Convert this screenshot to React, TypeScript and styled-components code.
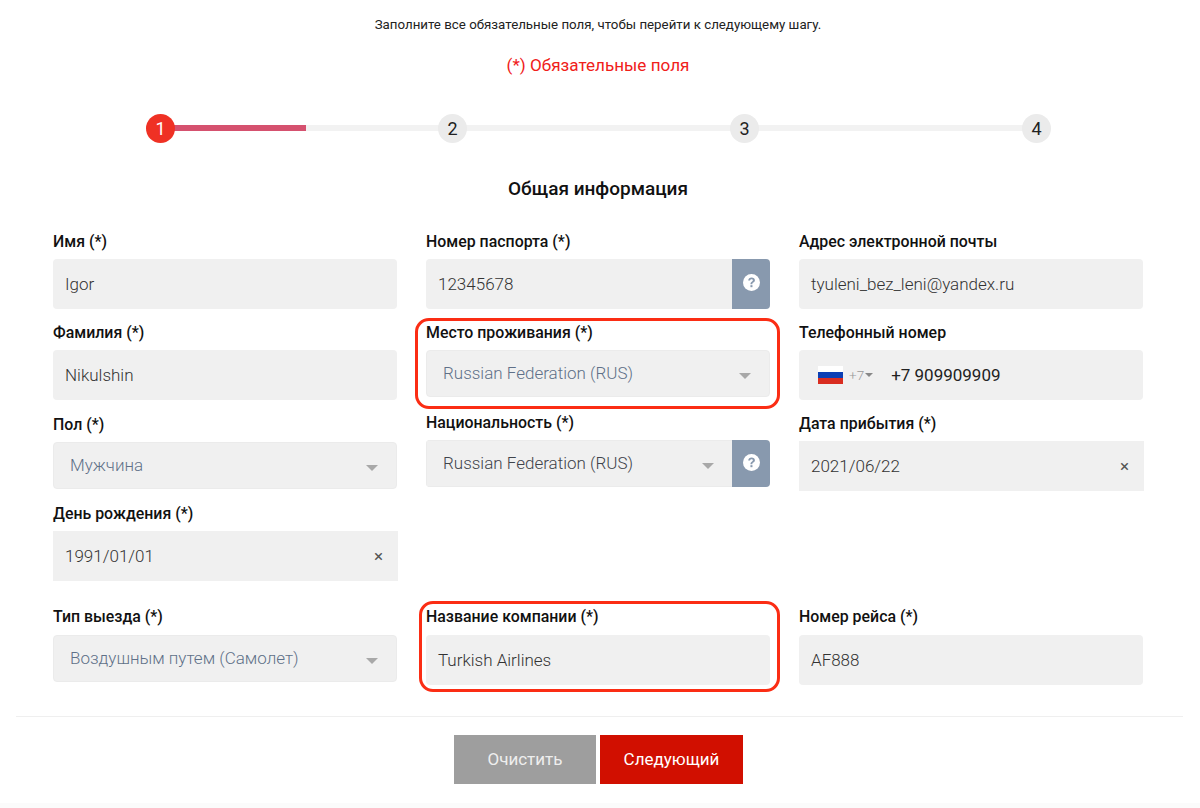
import React from "react";
import styled, { createGlobalStyle } from "styled-components";

const Global = createGlobalStyle`
  html, body { margin: 0; padding: 0; background: #fff; }
  body { font-family: Roboto, "Noto Sans", sans-serif; color: #111; }
`;

const Page = styled.div`
  width: 1200px;
  height: 808px;
  overflow: hidden;
  box-sizing: border-box;
  padding-top: 16px;
`;

const Intro = styled.p`
  margin: 0;
  height: 18px;
  line-height: 18px;
  padding-right: 4px;
  text-align: center;
  font-size: 13.3px;
  color: #222;
`;

const Required = styled.p`
  margin: 21px 0 0;
  height: 20px;
  line-height: 20px;
  padding-right: 4px;
  text-align: center;
  font-size: 17.1px;
  color: #f0201a;
`;

const Stepper = styled.div`
  position: relative;
  margin: 39px 0 0 146px;
  width: 905px;
  height: 29px;
  display: flex;
  justify-content: space-between;
  align-items: center;
`;

const Track = styled.div`
  position: absolute;
  left: 14px;
  right: 14px;
  top: 11px;
  height: 6px;
  background: #f2f2f2;
`;

const TrackFill = styled.div`
  height: 100%;
  width: 146px;
  background: #d5516f;
`;

const Step = styled.div<{ $active?: boolean }>`
  position: relative;
  width: 29px;
  height: 29px;
  border-radius: 50%;
  display: flex;
  align-items: center;
  justify-content: center;
  font-size: 18px;
  background: ${(p) => (p.$active ? "#ef3124" : "#ebebeb")};
  color: ${(p) => (p.$active ? "#fff" : "#222")};
`;

const Heading = styled.h2`
  margin: 34px 0 0;
  height: 24px;
  line-height: 24px;
  padding-right: 4px;
  text-align: center;
  font-size: 19px;
  font-weight: 500;
  color: #111;
`;

const Columns = styled.div`
  display: grid;
  grid-template-columns: repeat(3, 344px);
  column-gap: 29px;
  padding-left: 53px;
  margin-top: 31px;
`;

const Column = styled.div`
  height: 375px;
`;

const Field = styled.div<{ $gap?: number }>`
  position: relative;
  margin-bottom: ${(p) => p.$gap ?? 14}px;
`;

const Label = styled.label<{ $after?: number }>`
  display: block;
  height: 18px;
  line-height: 20px;
  margin-bottom: ${(p) => p.$after ?? 9}px;
  font-size: 15.9px;
  font-weight: 500;
  color: #111;
`;

const Control = styled.div<{ $square?: boolean; $wide?: boolean; $fill?: boolean }>`
  display: flex;
  align-items: center;
  box-sizing: border-box;
  height: 50px;
  width: ${(p) => (p.$fill ? "auto" : p.$wide ? "345px" : "344px")};
  flex: ${(p) => (p.$fill ? 1 : "none")};
  padding: 0 12px;
  background: #f0f0f0;
  border-radius: ${(p) => (p.$square ? 0 : 4)}px;
  font-size: 17px;
  font-weight: 300;
  color: #333;
  overflow: hidden;
`;

const Spacer = styled.span`
  flex: 1;
`;

const SelectBox = styled.div<{ $joined?: boolean }>`
  display: flex;
  align-items: center;
  box-sizing: border-box;
  height: 47px;
  width: ${(p) => (p.$joined ? "auto" : "344px")};
  flex: ${(p) => (p.$joined ? 1 : "none")};
  padding: 0 18px 2px 16px;
  background: #f0f0f0;
  border: 1px solid #ebebeb;
  border-right-width: ${(p) => (p.$joined ? 0 : 1)}px;
  border-radius: ${(p) => (p.$joined ? 0 : 4)}px;
  font-size: 17px;
  font-weight: 300;
`;

const SelectText = styled.span<{ $muted?: boolean }>`
  flex: 1;
  color: ${(p) => (p.$muted ? "#5f7088" : "#3f444b")};
`;

const Caret = styled.span`
  width: 0;
  height: 0;
  margin-top: 7px;
  border-left: 6px solid transparent;
  border-right: 6px solid transparent;
  border-top: 6px solid #a8a8a8;
`;

const Joined = styled.div<{ $tall?: boolean }>`
  display: flex;
  height: ${(p) => (p.$tall ? 47 : 50)}px;
  border-radius: 4px;
  overflow: hidden;
`;

const HelpButton = styled.span`
  flex: none;
  width: 38px;
  display: flex;
  align-items: center;
  justify-content: center;
  padding-bottom: 3px;
  box-sizing: border-box;
  background: #8899ae;
`;

const Clear = styled.span`
  font-size: 17px;
  font-weight: 400;
  color: #555;
  margin-right: 3px;
`;

const Flag = styled.svg`
  flex: none;
  width: 25px;
  height: 18px;
  margin: 0 6px 0 7px;
`;

const Dial = styled.span`
  font-size: 13.5px;
  color: #999;
`;

const DialCaret = styled.span`
  width: 0;
  height: 0;
  margin-left: 1px;
  border-left: 4px solid transparent;
  border-right: 4px solid transparent;
  border-top: 4px solid #888;
`;

const Phone = styled.span`
  margin-left: 18px;
  font-weight: 400;
  color: #222;
`;

const SecondRow = styled.div`
  display: grid;
  grid-template-columns: repeat(3, 344px);
  column-gap: 29px;
  padding-left: 53px;
`;

const Highlight = styled.div<{ $left: number; $top: number; $w: number; $h: number }>`
  position: absolute;
  left: ${(p) => p.$left}px;
  top: ${(p) => p.$top}px;
  width: ${(p) => p.$w}px;
  height: ${(p) => p.$h}px;
  box-sizing: border-box;
  border: 3px solid #fb2d14;
  border-radius: 14px;
  pointer-events: none;
`;

const Divider = styled.hr`
  margin: 31px 17px 0 16px;
  border: 0;
  height: 1px;
  background: #efefef;
`;

const Actions = styled.div`
  display: flex;
  justify-content: center;
  gap: 4px;
  margin-top: 18px;
  padding-right: 3px;
`;

const Button = styled.button<{ $primary?: boolean }>`
  width: ${(p) => (p.$primary ? 143 : 142)}px;
  height: 49px;
  border: 0;
  padding: 0 0 1px;
  font-family: Roboto, sans-serif;
  font-size: 17px;
  font-weight: 400;
  color: ${(p) => (p.$primary ? "#fff" : "#eeeeee")};
  background: ${(p) => (p.$primary ? "#d10f00" : "#9e9e9e")};
`;

const BottomEdge = styled.div`
  margin-top: 19px;
  height: 10px;
  background: #fbfbfb;
`;

const Help = () => (
  <svg width="17" height="17" viewBox="0 0 16 16" aria-hidden="true">
    <circle cx="8" cy="8" r="8" fill="#fff" />
    <path d="M4.9 6.1C5 4.2 6.3 3.2 8.1 3.2c1.8 0 3.1 1 3.1 2.6 0 1.2-.7 1.8-1.5 2.3-.7.5-.9.8-.9 1.5H7c0-1.2.4-1.8 1.2-2.4.7-.5 1.1-.8 1.1-1.3 0-.6-.5-1-1.2-1-.8 0-1.3.5-1.4 1.2H4.9z" fill="#8899ae" />
    <rect x="7" y="10.5" width="1.9" height="1.9" fill="#8899ae" />
  </svg>
);

export default function App() {
  return (
    <Page>
      <Global />
      <Intro>Заполните все обязательные поля, чтобы перейти к следующему шагу.</Intro>
      <Required>(*) Обязательные поля</Required>
      <Stepper>
        <Track><TrackFill /></Track>
        <Step $active>1</Step>
        <Step>2</Step>
        <Step>3</Step>
        <Step>4</Step>
      </Stepper>
      <Heading>Общая информация</Heading>
      <Columns>
        <Column>
          <Field $gap={14}>
            <Label>Имя (*)</Label>
            <Control>Igor</Control>
          </Field>
          <Field $gap={15}>
            <Label>Фамилия (*)</Label>
            <Control>Nikulshin</Control>
          </Field>
          <Field $gap={15}>
            <Label>Пол (*)</Label>
            <SelectBox>
              <SelectText $muted>Мужчина</SelectText>
              <Caret />
            </SelectBox>
          </Field>
          <Field>
            <Label>День рождения (*)</Label>
            <Control $square $wide>1991/01/01<Spacer /><Clear>×</Clear></Control>
          </Field>
        </Column>
        <Column>
          <Field $gap={14}>
            <Label>Номер паспорта (*)</Label>
            <Joined>
              <Control $square $fill>12345678</Control>
              <HelpButton><Help /></HelpButton>
            </Joined>
          </Field>
          <Field $gap={16}>
            <Label>Место проживания (*)</Label>
            <SelectBox>
              <SelectText $muted>Russian Federation (RUS)</SelectText>
              <Caret />
            </SelectBox>
            <Highlight $left={-11} $top={-5} $w={365} $h={91} />
          </Field>
          <Field>
            <Label>Национальность (*)</Label>
            <Joined $tall>
              <SelectBox $joined>
                <SelectText>Russian Federation (RUS)</SelectText>
                <Caret />
              </SelectBox>
              <HelpButton><Help /></HelpButton>
            </Joined>
          </Field>
        </Column>
        <Column>
          <Field $gap={14}>
            <Label>Адрес электронной почты</Label>
            <Control>tyuleni_bez_leni@yandex.ru</Control>
          </Field>
          <Field $gap={14}>
            <Label>Телефонный номер</Label>
            <Control>
              <Flag viewBox="0 0 25 18" aria-hidden="true">
                <rect width="25" height="6" fill="#ffffff" />
                <rect y="6" width="25" height="6" fill="#0c3fb4" />
                <rect y="12" width="25" height="6" fill="#d92d20" />
              </Flag>
              <Dial>+7</Dial>
              <DialCaret />
              <Phone>+7 909909909</Phone>
            </Control>
          </Field>
          <Field>
            <Label>Дата прибытия (*)</Label>
            <Control $square $wide>2021/06/22<Spacer /><Clear>×</Clear></Control>
          </Field>
        </Column>
      </Columns>
      <SecondRow>
        <Field $gap={0}>
          <Label $after={10}>Тип выезда (*)</Label>
          <SelectBox>
            <SelectText $muted>Воздушным путем (Самолет)</SelectText>
            <Caret />
          </SelectBox>
        </Field>
        <Field $gap={0}>
          <Label $after={10}>Название компании (*)</Label>
          <Control>Turkish Airlines</Control>
          <Highlight $left={-7} $top={-6} $w={361} $h={91} />
        </Field>
        <Field $gap={0}>
          <Label $after={10}>Номер рейса (*)</Label>
          <Control>AF888</Control>
        </Field>
      </SecondRow>
      <Divider />
      <Actions>
        <Button>Очистить</Button>
        <Button $primary>Следующий</Button>
      </Actions>
      <BottomEdge />
    </Page>
  );
}
